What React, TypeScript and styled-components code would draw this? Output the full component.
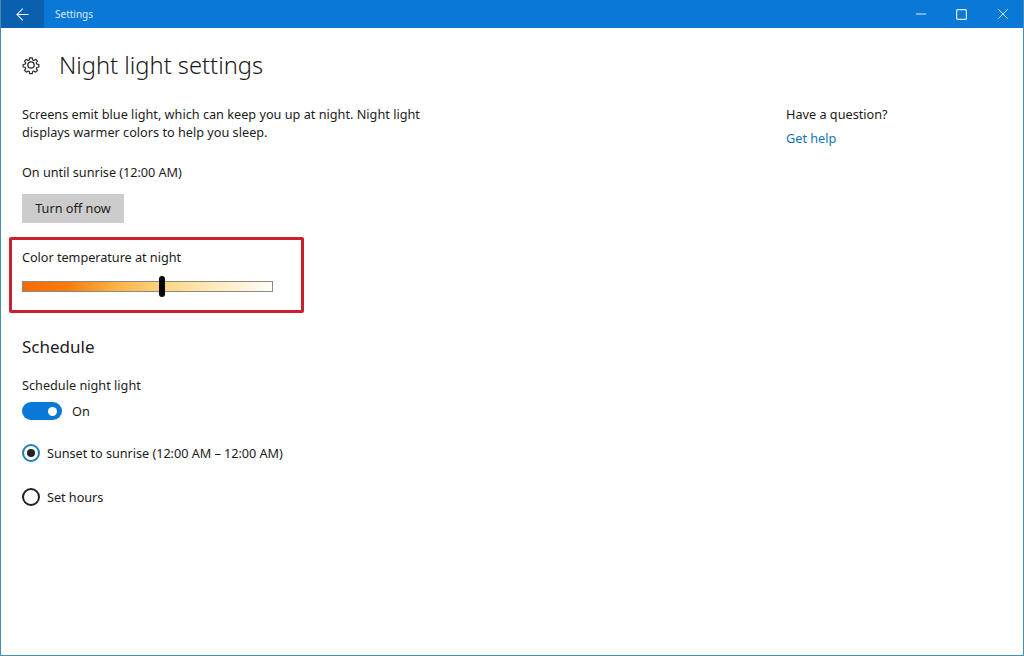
import React from 'react';
import styled, { createGlobalStyle } from 'styled-components';
import { ArrowLeft, Minus, Square, X } from 'lucide-react';

const GlobalStyle = createGlobalStyle`
  html, body {
    margin: 0;
    padding: 0;
    background: #fff;
  }
  body {
    font-family: "Noto Sans", "Open Sans", sans-serif;
    color: #1c1c1c;
  }
`;

const Window = styled.div`
  width: 1024px;
  height: 656px;
  box-sizing: border-box;
  border: 1px solid #4a8db0;
  border-top: 0;
  display: flex;
  flex-direction: column;
  overflow: hidden;
`;

const TitleBar = styled.div`
  height: 28px;
  flex: none;
  background: #0a78d7;
  display: flex;
  align-items: center;
  color: #fff;
`;

const BackButton = styled.div`
  width: 43px;
  height: 100%;
  background: #0a5fae;
  display: flex;
  align-items: center;
  justify-content: center;
`;

const TitleText = styled.span`
  margin-left: 11px;
  font-size: 10px;
  color: #d8ecfb;
  flex: 1;
`;

const Caption = styled.div`
  display: flex;
  align-items: center;
  height: 100%;
`;

const CaptionButton = styled.div`
  width: 41px;
  height: 100%;
  display: flex;
  align-items: center;
  justify-content: center;
  color: #dff0fc;
`;

const Body = styled.div`
  flex: 1;
  display: flex;
  justify-content: space-between;
`;

const Main = styled.main`
  width: 500px;
  padding-left: 21px;
`;

const PageHeader = styled.div`
  display: flex;
  align-items: center;
  gap: 18px;
  height: 34px;
  margin-top: 20px;
  margin-left: -1px;
`;

const PageTitle = styled.h1`
  margin: 0;
  font-size: 23.7px;
  font-weight: 300;
  line-height: 34px;
  color: #1a1a1a;
`;

const Paragraph = styled.p`
  margin: 23px 0 0;
  font-size: 12.7px;
  line-height: 18px;
  width: 420px;
`;

const StatusText = styled.div`
  margin-top: 22px;
  font-size: 12.7px;
  letter-spacing: -0.04px;
  line-height: 18px;
`;

const ActionButton = styled.button`
  display: block;
  margin-top: 13px;
  width: 102px;
  height: 29px;
  border: 0;
  padding: 0 0 2px;
  background: #cccccc;
  color: #1c1c1c;
  font-family: inherit;
  font-size: 12.7px;
`;

const Highlight = styled.section`
  box-sizing: border-box;
  width: 295px;
  height: 76px;
  margin: 14px 0 0 -13px;
  padding: 8px 0 0 10px;
  border: 3px solid #c9202f;
  border-radius: 2px;
`;

const SliderLabel = styled.div`
  font-size: 12.7px;
  letter-spacing: -0.04px;
  line-height: 18px;
`;

const SliderTrack = styled.div`
  position: relative;
  box-sizing: border-box;
  width: 251px;
  height: 11px;
  margin-top: 15px;
  border: 1px solid #8a8a80;
  background: linear-gradient(
    to right,
    #f76a05 0%,
    #f97c0c 18%,
    #fbb040 36%,
    #fdd582 56%,
    #fee9bd 76%,
    #fffdf8 100%
  );
`;

const SliderThumb = styled.div`
  position: absolute;
  left: 136px;
  top: -6px;
  width: 6px;
  height: 21px;
  border-radius: 3px;
  background: #060606;
`;

const SectionTitle = styled.h2`
  margin: 21px 0 0;
  font-size: 17px;
  font-weight: 400;
  line-height: 26px;
`;

const FieldLabel = styled.div`
  margin-top: 16px;
  font-size: 12.7px;
  line-height: 18px;
`;

const ToggleRow = styled.div`
  display: flex;
  align-items: center;
  gap: 10px;
  margin-top: 8px;
  font-size: 12.7px;
  height: 18px;
`;

const Toggle = styled.div`
  position: relative;
  width: 40px;
  height: 18px;
  border-radius: 9px;
  background: #0a78d7;
`;

const ToggleKnob = styled.div`
  position: absolute;
  right: 5px;
  top: 4.5px;
  width: 9px;
  height: 9px;
  border-radius: 50%;
  background: #fff;
`;

const RadioRow = styled.div<{ $gap: number }>`
  display: flex;
  align-items: center;
  gap: 7px;
  margin-top: ${(p) => p.$gap}px;
  font-size: 12.7px;
  letter-spacing: -0.04px;
  line-height: 18px;
`;

const RadioCircle = styled.div<{ $checked?: boolean }>`
  box-sizing: border-box;
  width: 18px;
  height: 18px;
  border-radius: 50%;
  border: 2px solid ${(p) => (p.$checked ? '#1f7fb8' : '#222')};
  display: flex;
  align-items: center;
  justify-content: center;
  &::after {
    content: '';
    display: ${(p) => (p.$checked ? 'block' : 'none')};
    width: 8px;
    height: 8px;
    border-radius: 50%;
    background: #222;
  }
`;

const Aside = styled.aside`
  width: 237px;
  padding-top: 77px;
  font-size: 12.7px;
  line-height: 18px;
`;

const HelpLink = styled.a`
  display: block;
  margin-top: 6px;
  color: #0f73b5;
`;

const GearIcon = () => (
  <svg width="20" height="20" viewBox="0 0 24 24" fill="none" stroke="#2a2a2a" strokeWidth="1.6" strokeLinejoin="round">
    <path d="M10.3 2.5h3.4l.5 2.8 1.7.7 2.3-1.6 2.4 2.4-1.6 2.3.7 1.7 2.8.5v3.4l-2.8.5-.7 1.7 1.6 2.3-2.4 2.4-2.3-1.6-1.7.7-.5 2.8h-3.4l-.5-2.8-1.7-.7-2.3 1.6-2.4-2.4 1.6-2.3-.7-1.7-2.8-.5v-3.4l2.8-.5.7-1.7-1.6-2.3 2.4-2.4 2.3 1.6 1.7-.7z" transform="translate(1.2 1.2) scale(.9)" />
    <circle cx="12" cy="12" r="3.8" />
  </svg>
);

export default function App() {
  return (
    <>
      <GlobalStyle />
      <Window>
        <TitleBar>
          <BackButton>
            <ArrowLeft size={19} strokeWidth={1.3} />
          </BackButton>
          <TitleText>Settings</TitleText>
          <Caption>
            <CaptionButton>
              <Minus size={16} strokeWidth={1.6} />
            </CaptionButton>
            <CaptionButton>
              <Square size={13} strokeWidth={2.2} />
            </CaptionButton>
            <CaptionButton>
              <X size={18} strokeWidth={1.2} />
            </CaptionButton>
          </Caption>
        </TitleBar>
        <Body>
          <Main>
            <PageHeader>
              <GearIcon />
              <PageTitle>Night light settings</PageTitle>
            </PageHeader>
            <Paragraph>
              Screens emit blue light, which can keep you up at night. Night light displays warmer colors to help you
              sleep.
            </Paragraph>
            <StatusText>On until sunrise (12:00 AM)</StatusText>
            <ActionButton>Turn off now</ActionButton>
            <Highlight>
              <SliderLabel>Color temperature at night</SliderLabel>
              <SliderTrack>
                <SliderThumb />
              </SliderTrack>
            </Highlight>
            <SectionTitle>Schedule</SectionTitle>
            <FieldLabel>Schedule night light</FieldLabel>
            <ToggleRow>
              <Toggle>
                <ToggleKnob />
              </Toggle>
              On
            </ToggleRow>
            <RadioRow $gap={24}>
              <RadioCircle $checked />
              Sunset to sunrise (12:00 AM – 12:00 AM)
            </RadioRow>
            <RadioRow $gap={26}>
              <RadioCircle />
              Set hours
            </RadioRow>
          </Main>
          <Aside>
            <div>Have a question?</div>
            <HelpLink>Get help</HelpLink>
          </Aside>
        </Body>
      </Window>
    </>
  );
}
